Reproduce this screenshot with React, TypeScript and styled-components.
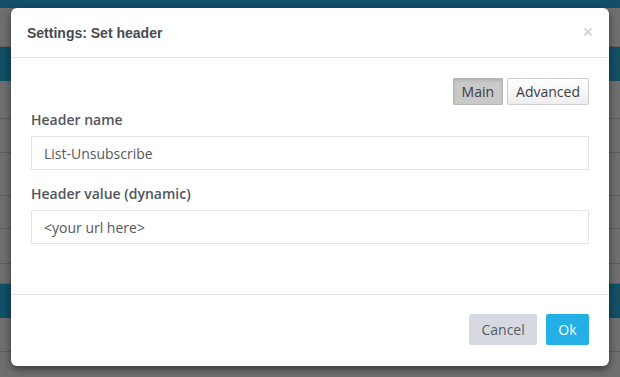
import styled, { createGlobalStyle } from "styled-components";

const GlobalStyle = createGlobalStyle`
  html, body {
    margin: 0;
    padding: 0;
    width: 620px;
    height: 377px;
    overflow: hidden;
    font-family: "Open Sans", "Liberation Sans", sans-serif;
  }
`;

const Page = styled.div`
  position: relative;
  width: 620px;
  height: 377px;
  background: #6f6f6f;
  display: flex;
  flex-direction: column;
  overflow: hidden;
`;

const Band = styled.div<{ $h: number; $teal?: boolean }>`
  height: ${(p) => p.$h}px;
  flex-shrink: 0;
  background: ${(p) => (p.$teal ? "#124f68" : "#6f6f6f")};
  border-bottom: ${(p) => (p.$teal ? "none" : "1px solid #5e5e5e")};
  box-sizing: border-box;
`;

const Modal = styled.div`
  position: absolute;
  left: 11px;
  top: 8px;
  width: 598px;
  height: 358px;
  background: #fff;
  border-radius: 6px;
  box-shadow: 0 3px 9px rgba(0, 0, 0, 0.5);
  display: flex;
  flex-direction: column;
`;

const Header = styled.div`
  height: 50px;
  box-sizing: border-box;
  border-bottom: 1px solid #e5e5e5;
  display: flex;
  align-items: center;
  justify-content: space-between;
  padding: 0 16px 0 16px;
`;

const Title = styled.h4`
  margin: 0;
  font-family: "Liberation Sans", Arial, sans-serif;
  font-weight: bold;
  font-size: 14px;
  color: #464a52;
`;

const Close = styled.span`
  font-family: "Liberation Sans", Arial, sans-serif;
  font-size: 18px;
  line-height: 1;
  color: #c8c8c8;
  margin-top: -2px;
`;

const Body = styled.div`
  flex: 1;
  padding: 20px 20px 0 20px;
  border-bottom: 1px solid #e5e5e5;
`;

const Tabs = styled.div`
  display: flex;
  justify-content: flex-end;
  gap: 4px;
`;

const Tab = styled.button<{ $active?: boolean }>`
  height: 27px;
  padding: 0 8px;
  font-family: "Open Sans", sans-serif;
  font-size: 14px;
  color: #3d3d3d;
  border: 1px solid ${(p) => (p.$active ? "#b5b5b5" : "#cfcfcf")};
  background: ${(p) =>
    p.$active
      ? "#c9c9c9"
      : "linear-gradient(to bottom, #ffffff 0%, #eeeeee 100%)"};
  box-shadow: ${(p) => (p.$active ? "inset 0 2px 3px rgba(0,0,0,0.1)" : "none")};
  border-radius: 1px;
`;

const Group = styled.div`
  display: flex;
  flex-direction: column;
  margin-top: 5px;
  & + & {
    margin-top: 14px;
  }
`;

const Label = styled.label`
  font-size: 14px;
  font-weight: 600;
  line-height: 20px;
  color: #51555c;
  margin-bottom: 6px;
`;

const Input = styled.input`
  height: 34px;
  box-sizing: border-box;
  border: 1px solid #e4e4ea;
  padding: 0 12px;
  font-family: "Open Sans", sans-serif;
  font-size: 14px;
  color: #55585e;
  outline: none;
`;

const Footer = styled.div`
  height: 71px;
  box-sizing: border-box;
  display: flex;
  justify-content: flex-end;
  align-items: flex-start;
  gap: 9px;
  padding: 19px 20px 0 20px;
`;

const Button = styled.button<{ $primary?: boolean }>`
  height: 31px;
  padding: 0 ${(p) => (p.$primary ? 12.5 : 12)}px;
  border: none;
  border-radius: 2px;
  font-family: "Open Sans", sans-serif;
  font-size: 14px;
  background: ${(p) => (p.$primary ? "#24b0e6" : "#d6d9e1")};
  color: ${(p) => (p.$primary ? "#ffffff" : "#595d66")};
`;

export default function App() {
  return (
    <>
      <GlobalStyle />
      <Page>
        <Band $h={8} $teal />
        <Band $h={39} />
        <Band $h={34} $teal />
        <Band $h={38} />
        <Band $h={34} />
        <Band $h={43} />
        <Band $h={33} />
        <Band $h={35} />
        <Band $h={20} />
        <Band $h={34} $teal />
        <Band $h={34} />
        <Band $h={30} />
        <Modal>
          <Header>
            <Title>Settings: Set header</Title>
            <Close>×</Close>
          </Header>
          <Body>
            <Tabs>
              <Tab $active>Main</Tab>
              <Tab>Advanced</Tab>
            </Tabs>
            <Group>
              <Label>Header name</Label>
              <Input defaultValue="List-Unsubscribe" />
            </Group>
            <Group>
              <Label>Header value (dynamic)</Label>
              <Input defaultValue="<your url here>" />
            </Group>
          </Body>
          <Footer>
            <Button>Cancel</Button>
            <Button $primary>Ok</Button>
          </Footer>
        </Modal>
      </Page>
    </>
  );
}
